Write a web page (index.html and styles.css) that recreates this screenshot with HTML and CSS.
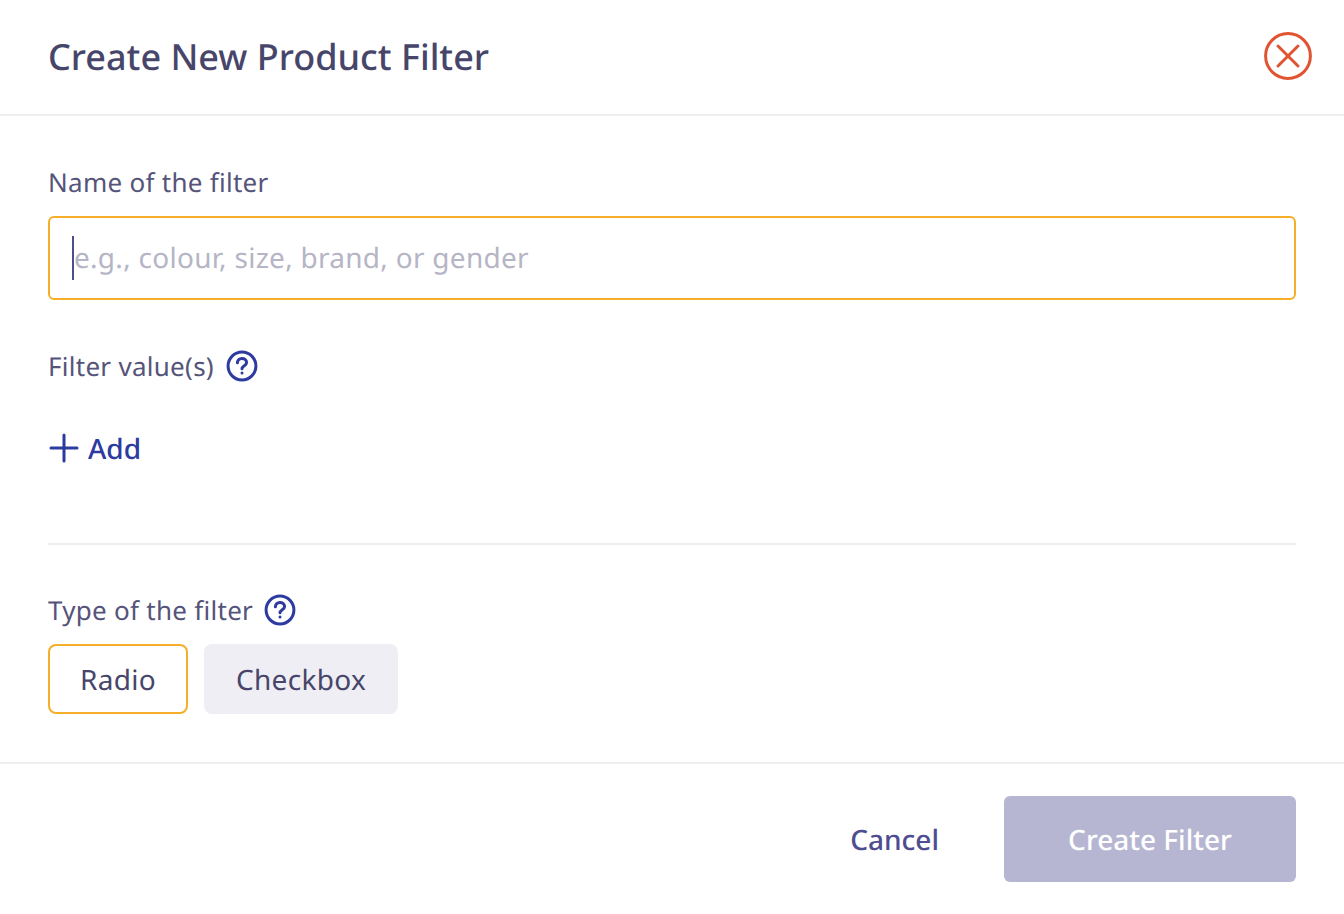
FILE: index.html
```html
<!DOCTYPE html>
<html lang="en">
<head>
<meta charset="utf-8">
<title>Create New Product Filter</title>
<link rel="stylesheet" href="styles.css">
</head>
<body>
<div class="modal">
  <header class="header">
    <h1 class="title">Create New Product Filter</h1>
    <button class="close" aria-label="Close">
      <svg width="48" height="48" viewBox="0 0 48 48" fill="none" stroke="#e05433" stroke-width="3" stroke-linecap="round"><circle cx="24" cy="24" r="22.4"/><path d="M14 14L34 34M34 14L14 34"/></svg>
    </button>
  </header>
  <main class="body">
    <section class="name-section">
      <label class="label">Name of the filter</label>
      <div class="input"><span class="caret"></span><span class="placeholder">e.g., colour, size, brand, or gender</span></div>
    </section>
    <section class="values-section">
      <div class="label-row values-row">
        <span class="label">Filter value(s)</span>
        <svg class="help" width="32" height="32" viewBox="0 0 32 32" fill="none" stroke="#2d3a9f" stroke-width="3"><circle cx="16" cy="16" r="13.9"/><path d="M11.4 12.8c0-2.7 2.1-4.4 4.6-4.4s4.6 1.7 4.6 4c0 3.3-4.6 3.2-4.6 6.4" stroke-linecap="round"/><circle cx="16" cy="23" r="1.5" fill="#2d3a9f" stroke="none"/></svg>
      </div>
      <button class="add">
        <svg width="30" height="30" viewBox="0 0 30 30" fill="none" stroke="#2d3a9f" stroke-width="3" stroke-linecap="round"><path d="M15 2V28M2 15H28"/></svg>
        <span class="add-text">Add</span>
      </button>
    </section>
    <section class="type-section">
      <div class="label-row">
        <span class="label">Type of the filter</span>
        <svg class="help" width="32" height="32" viewBox="0 0 32 32" fill="none" stroke="#2d3a9f" stroke-width="3"><circle cx="16" cy="16" r="13.9"/><path d="M11.4 12.8c0-2.7 2.1-4.4 4.6-4.4s4.6 1.7 4.6 4c0 3.3-4.6 3.2-4.6 6.4" stroke-linecap="round"/><circle cx="16" cy="23" r="1.5" fill="#2d3a9f" stroke="none"/></svg>
      </div>
      <div class="options">
        <button class="option selected">Radio</button>
        <button class="option">Checkbox</button>
      </div>
    </section>
  </main>
  <footer class="footer">
    <button class="cancel">Cancel</button>
    <button class="create">Create Filter</button>
  </footer>
</div>
</body>
</html>
```
FILE: styles.css
```css
* { box-sizing: border-box; }
html, body { margin: 0; height: 100%; background: #fff; }
body { font-family: "Noto Sans", sans-serif; color: #43425d; overflow: hidden; text-rendering: geometricPrecision; }
button { font-family: inherit; text-rendering: inherit; background: none; border: 0; padding: 0; cursor: pointer; }
.modal { width: 1344px; height: 914px; display: flex; flex-direction: column; }
.header { height: 116px; border-bottom: 2px solid #eeeef0; padding: 0 32px 0 48px; display: flex; align-items: center; justify-content: space-between; }
.title { margin: 0; font-size: 36px; font-weight: 500; line-height: 48px; color: #47466a; }
.close { width: 48px; height: 48px; display: block; margin-top: -2px; }
.close svg { display: block; }
.body { padding: 0 48px; height: 648px; border-bottom: 2px solid #eeeef0; }
.label { font-size: 26px; line-height: 36px; color: #55547a; display: block; letter-spacing: 0.28px; }
.name-section { padding-top: 48px; }
.input { height: 84px; margin-top: 16px; border: 2px solid #f5ae27; border-radius: 6px; padding: 0 22px; display: flex; align-items: center; }
.caret { width: 2px; height: 44px; background: #4e4d92; flex: none; }
.placeholder { font-size: 28px; line-height: 38px; color: #b5b5c5; margin-top: -1px; letter-spacing: 0.28px; }
.values-section { padding-top: 48px; padding-bottom: 75px; border-bottom: 2px solid #eeeef0; }
.label-row { display: flex; align-items: center; gap: 11px; height: 36px; }
.values-row { gap: 12px; }
.help { flex: none; }
.add { margin-top: 44px; margin-left: 1px; display: flex; align-items: center; gap: 9px; color: #2d3a9f; font-size: 28px; font-weight: 500; line-height: 38px; }
.add-text { margin-top: 2px; }
.type-section { padding-top: 47px; }
.options { display: flex; gap: 16px; margin-top: 16px; }
.option { height: 70px; width: 194px; padding-top: 2px; border-radius: 8px; background: #efeef4; color: #47466a; font-size: 28px; letter-spacing: 0.3px; }
.option.selected { width: 140px; background: #fff; border: 2px solid #f5ae27; }
.footer { flex: 1; padding: 32px 48px 0; display: flex; align-items: flex-start; justify-content: flex-end; gap: 65px; }
.cancel { height: 86px; padding-top: 2px; color: #4e4d92; font-size: 28px; font-weight: 500; }
.create { width: 292px; height: 86px; padding-top: 2px; border-radius: 6px; background: #b7b6d2; color: #fff; font-size: 28px; font-weight: 500; }
```
